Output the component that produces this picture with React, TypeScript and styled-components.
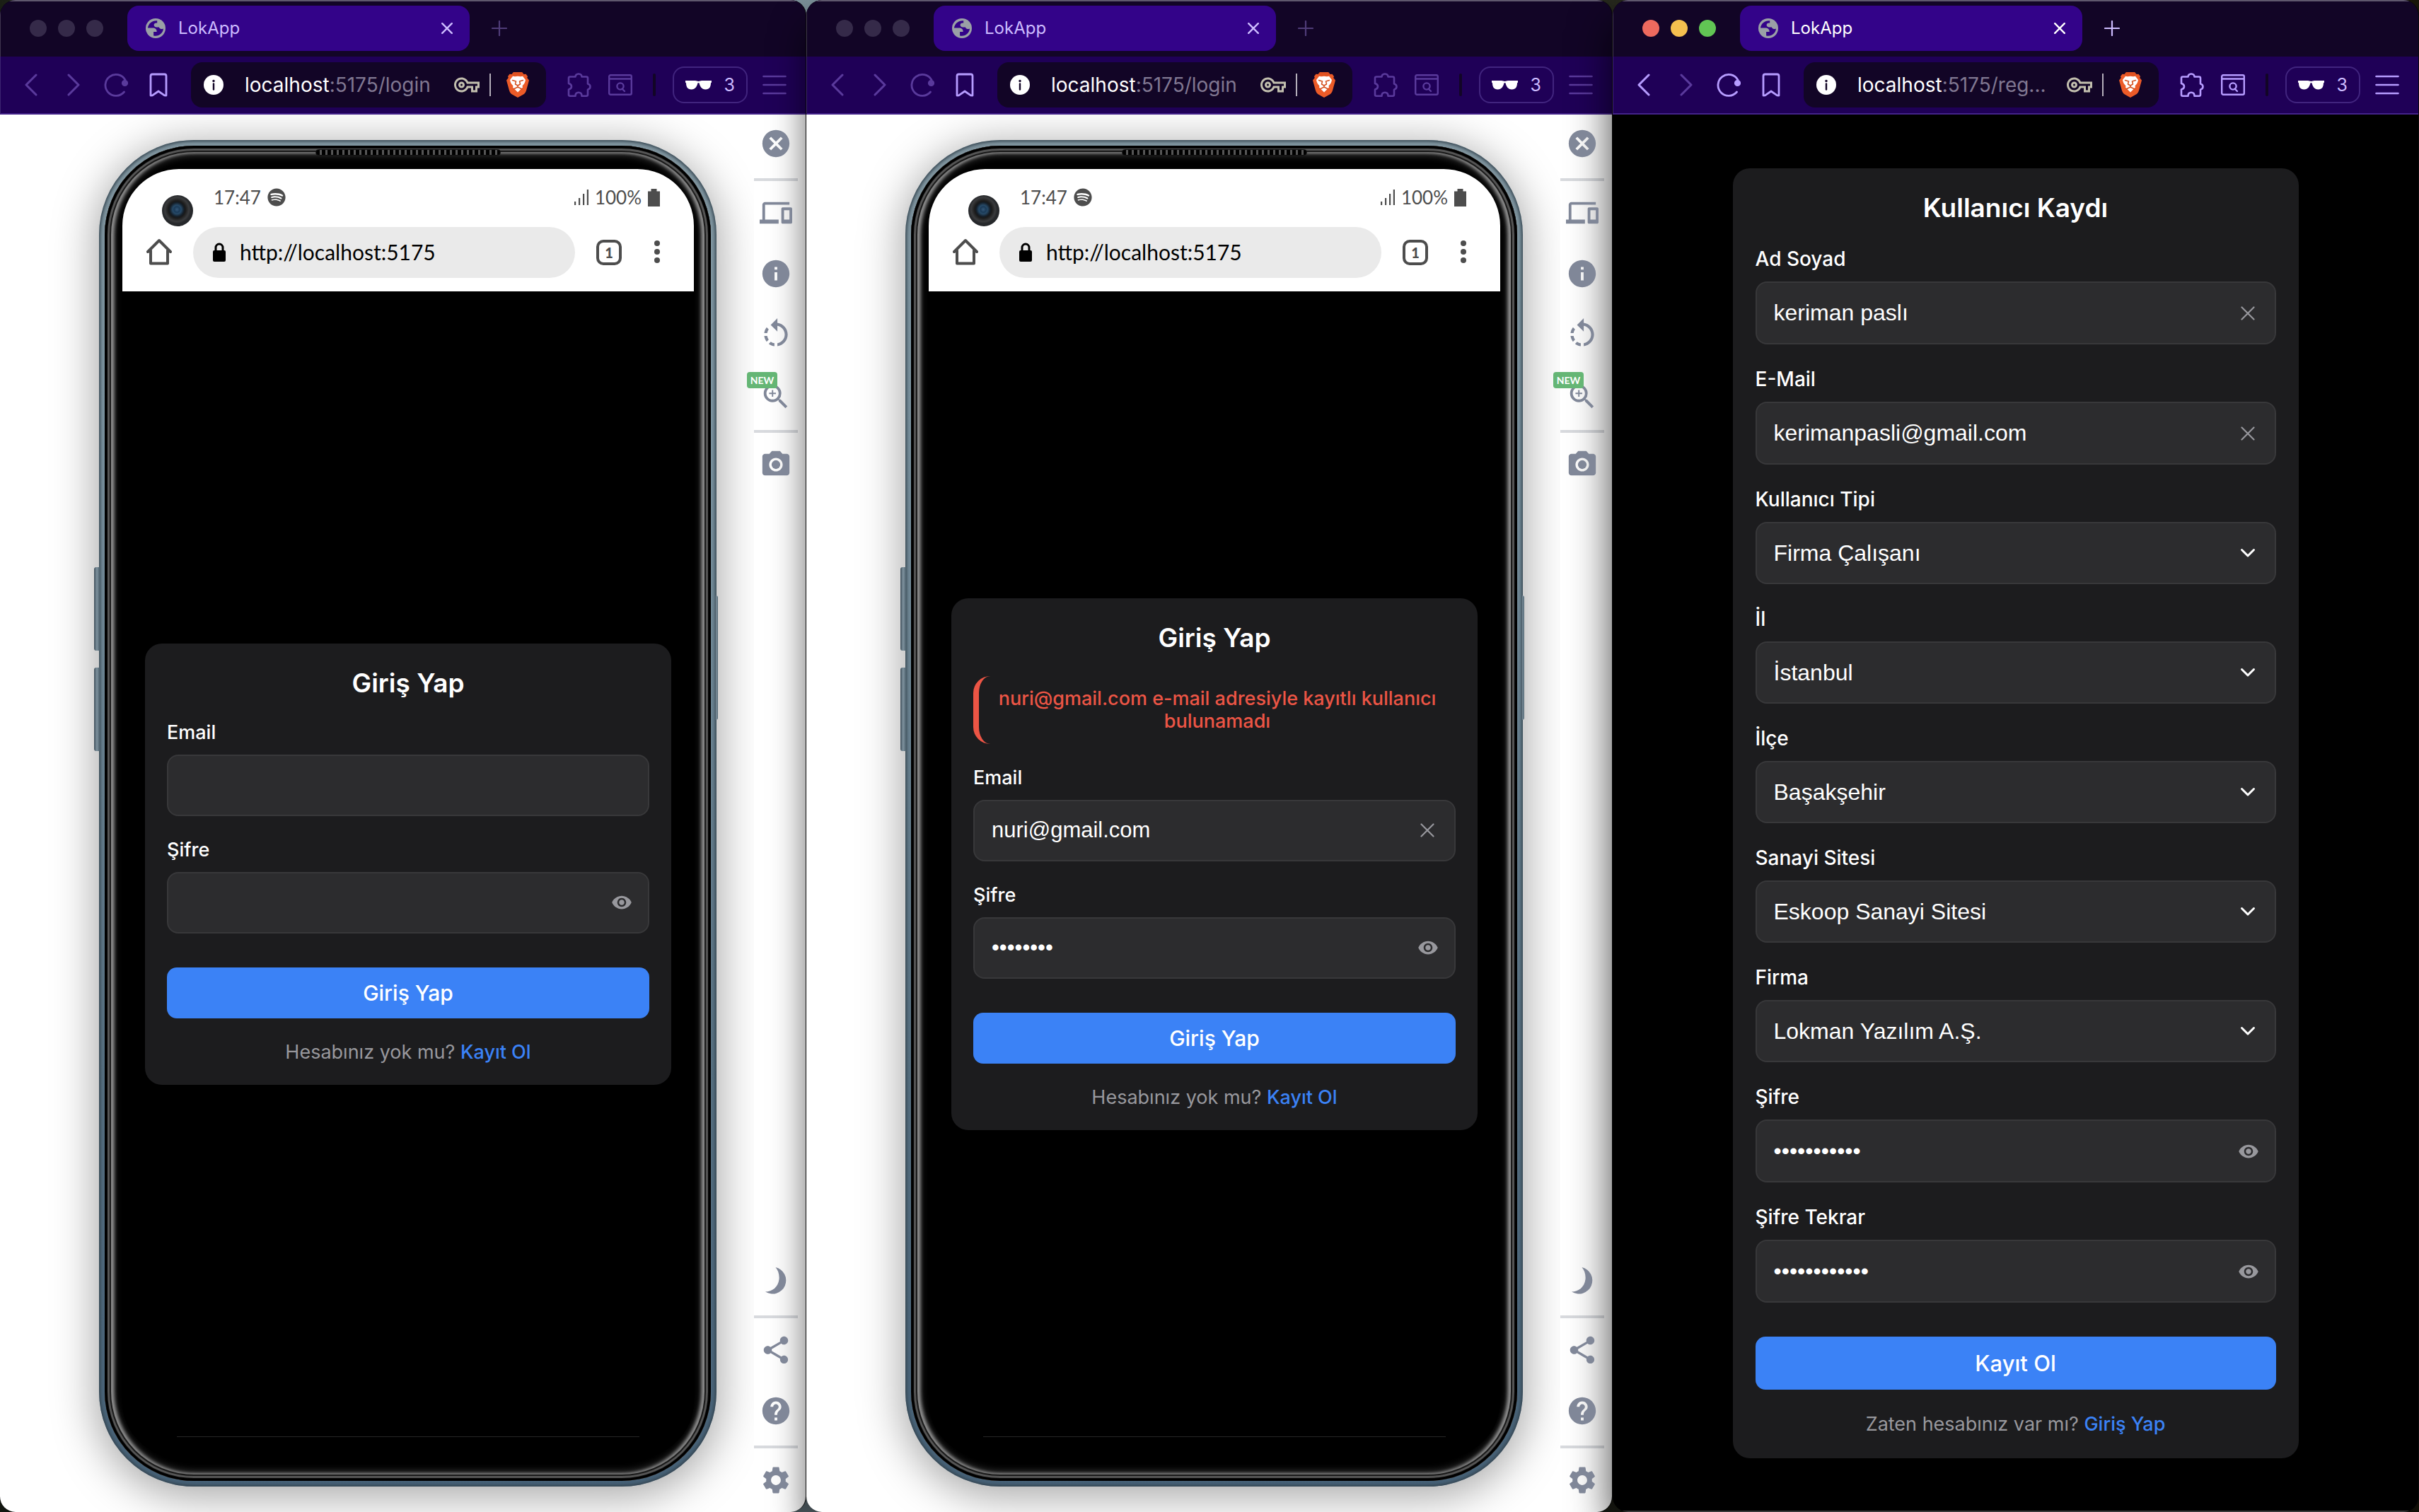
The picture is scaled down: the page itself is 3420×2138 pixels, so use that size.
import React, { useId, useState } from "react";
import styled, { createGlobalStyle, css } from "styled-components";
import {
  MdCancel,
  MdDevices,
  MdHelp,
  MdInfo,
  MdOutlineVpnKey,
  MdPhotoCamera,
  MdRotateLeft,
  MdSettings,
  MdShare,
  MdVisibility,
  MdZoomIn,
} from "react-icons/md";
import { FaSpotify } from "react-icons/fa";

const ui = `Inter, "Noto Sans", "Liberation Sans", sans-serif`;
const field = `"Liberation Sans", Arial, sans-serif`;
const phoneFont = `Lato, "Open Sans", sans-serif`;

const color = {
  strip: "#120526",
  tab: "#330389",
  toolbar: "#1f0057",
  line: "#43228a",
  lilac: "#b69cff",
  lilacDim: "#5a3a9c",
  card: "#1c1c1e",
  input: "#2c2c2e",
  inputLine: "#38383a",
  blue: "#3b82f6",
  muted: "#98989d",
  red: "#ec5545",
  tool: "#808798",
};

const GlobalStyle = createGlobalStyle`
  *, *::before, *::after { box-sizing: border-box; }
  body { margin: 0; background: #14160f; font-family: ${ui}; }
  button, input, select { font: inherit; color: inherit; margin: 0; }
  button { border: 0; padding: 0; background: none; cursor: pointer; }
`;

/* ---------- desktop and browser windows ---------- */

const Desktop = styled.div`
  display: grid;
  grid-template-columns: repeat(3, minmax(0, 1fr));
  min-height: 100vh;
  overflow: hidden;
  background: linear-gradient(to right, #1b2016, #7d929c 33%, #2a2d22 60%, #1a170a);
`;

const WindowFrame = styled.section<{ $active: boolean }>`
  display: flex;
  flex-direction: column;
  border-radius: 22px;
  overflow: hidden;
  border-right: 1px solid #0b0b0b;
  background: #000;
  box-shadow: ${(p) => (p.$active ? "0 30px 60px rgba(0,0,0,.75)" : "0 36px 50px rgba(0,0,0,.6)")};
`;

const TabStrip = styled.div`
  display: flex;
  align-items: center;
  height: 80px;
  padding: 6px 0 8px 41px;
  border-top: 2px solid #5f586d;
  border-left: 1px solid #40364f;
  background: ${color.strip};
`;

const Lights = styled.div`
  display: flex;
  gap: 16px;
  width: 138px;
`;

const Light = styled.span<{ $fill: string }>`
  width: 24px;
  height: 24px;
  border-radius: 50%;
  background: ${(p) => p.$fill};
`;

const Tab = styled.div<{ $active: boolean }>`
  display: flex;
  align-items: center;
  gap: 18px;
  width: 484px;
  height: 64px;
  padding: 0 20px 0 26px;
  border-radius: 16px;
  background: ${color.tab};
  color: ${(p) => (p.$active ? "#ffffff" : "#cdbcff")};
  font-size: 24px;
  line-height: 32px;
`;

const TabTitle = styled.span`
  flex: 1;
`;

const SmallButton = styled.button<{ $tint: string }>`
  display: grid;
  place-items: center;
  width: 24px;
  height: 24px;
  color: ${(p) => p.$tint};
`;

const NewTab = styled(SmallButton)`
  margin-left: 30px;
`;

const Toolbar = styled.div`
  display: flex;
  align-items: center;
  height: 82px;
  padding: 0 14px 0 13px;
  border-bottom: 2px solid ${color.line};
  border-left: 1px solid #3c2470;
  background: ${color.toolbar};
`;

const ToolButton = styled.button<{ $on?: boolean; $w?: number }>`
  display: grid;
  place-items: center;
  width: ${(p) => p.$w ?? 60}px;
  height: 60px;
  color: ${(p) => (p.$on ? color.lilac : color.lilacDim)};
`;

const Address = styled.div`
  display: flex;
  align-items: center;
  flex: 1;
  height: 64px;
  margin: 0 18px 0 16px;
  padding: 0 24px 0 18px;
  border-radius: 16px;
  background: ${color.strip};
`;

const AddressText = styled.span`
  flex: 1;
  margin-left: 30px;
  color: #807791;
  font-size: 28px;
  line-height: 36px;
  white-space: nowrap;
  b {
    color: #fff;
    font-weight: 400;
  }
`;

const AddressRule = styled.span`
  width: 2px;
  height: 32px;
  margin: 0 22px 0 14px;
  background: #b4afba;
`;

const BarRule = styled.span`
  width: 4px;
  height: 32px;
  margin: 0 24px 0 17px;
  border-radius: 2px;
  background: #120526;
`;

const PrivatePill = styled.button`
  display: flex;
  align-items: center;
  justify-content: space-between;
  width: 106px;
  height: 52px;
  margin-right: 8px;
  padding: 0 16px 0 16px;
  border: 2px solid #41247e;
  border-radius: 16px;
  color: #cdbcff;
  font-size: 25px;
  line-height: 32px;
`;

/* ---------- emulator page ---------- */

const EmulatorPage = styled.div`
  display: flex;
  flex: 1;
  background: #fff;
`;

const Stage = styled.main`
  display: flex;
  flex: 1;
  padding: 36px 53px 36px 140px;
  overflow: hidden;
`;

const PhoneBody = styled.div`
  position: relative;
  display: flex;
  flex: 1;
  padding: 8px;
  border-radius: 134px;
  background: linear-gradient(#80959f, #7b929e 20%, #566f80 70%, #466177);
  box-shadow:
    inset 0 0 4px 2px #34444f,
    0 10px 60px 6px rgba(0, 0, 0, 0.34);
`;

const SideKey = styled.i<{ $top: number; $height: number; $right?: boolean }>`
  position: absolute;
  top: ${(p) => p.$top}px;
  ${(p) => (p.$right ? "right: -2px;" : "left: -7px;")}
  width: ${(p) => (p.$right ? 4 : 8)}px;
  height: ${(p) => p.$height}px;
  border-radius: ${(p) => (p.$right ? "0 3px 3px 0" : "3px 0 0 3px")};
  background: linear-gradient(to right, #3f4f5b, #7f939f 50%, #4c5f6b);
`;

const Speaker = styled.i`
  position: absolute;
  top: 13px;
  left: 50%;
  width: 262px;
  height: 9px;
  margin-left: -131px;
  border-radius: 5px;
  border: 1px solid #111;
  background: repeating-linear-gradient(to right, #000 0 5px, #555 5px 8px);
`;

const Bezel = styled.div`
  display: flex;
  flex: 1;
  padding: 33px 24px 33px 25px;
  border-radius: 126px;
  background: #000;
  box-shadow:
    inset 0 0 1px 4px #000,
    inset 0 0 1px 7px #595959,
    inset 0 0 1px 9px #111,
    inset 4px 0 5px 9px #999,
    inset -4px 0 5px 9px #999,
    inset 0 0 12px 12px #4a4a4a;
`;

const Screen = styled.div`
  display: flex;
  flex-direction: column;
  flex: 1;
  overflow: hidden;
  border-radius: 80px;
  background: #000;
  font-family: ${phoneFont};
`;

const PhoneHeader = styled.header`
  display: flex;
  flex-direction: column;
  height: 173px;
  padding: 26px 48px 18px 34px;
  background: #fff;
  color: #4d4d4d;
`;

const StatusRow = styled.div`
  display: flex;
  align-items: center;
  gap: 9px;
  height: 28px;
  font-size: 26px;
  line-height: 28px;
`;

const CameraHole = styled.i`
  width: 44px;
  height: 44px;
  margin: 38px 20px 0 22px;
  border-radius: 50%;
  background: radial-gradient(circle at 48% 46%, #35597a 0, #1b3a57 4px, #274a68 6px, #141d26 10px, #1a1a1a 12px, #3a3b3d 17px, #26282b 20px);
`;

const StatusTime = styled.span`
  display: flex;
  flex: 1;
  align-items: center;
  gap: 9px;
`;

const PhoneNav = styled.div`
  display: flex;
  align-items: center;
  height: 72px;
  margin-top: 28px;
`;

const PhoneUrl = styled.label`
  display: flex;
  align-items: center;
  flex: 1;
  gap: 20px;
  height: 72px;
  margin: 0 30px;
  padding: 0 28px 2px;
  border-radius: 36px;
  background: #eaeaea;
  color: #000;
  input {
    flex: 1;
    min-width: 0;
    border: 0;
    padding: 0;
    background: none;
    font-size: 30px;
    line-height: 40px;
    outline: 0;
  }
`;

const TabsCount = styled.button`
  width: 36px;
  height: 36px;
  margin-right: 46px;
  border: 4px solid #4d4d4d;
  border-radius: 10px;
  font-size: 20px;
  font-weight: 900;
  line-height: 26px;
`;

const PhonePage = styled.div`
  display: flex;
  flex: 1;
  flex-direction: column;
  justify-content: center;
  padding: 0 32px;
  background: #000;
`;

const GestureLine = styled.div`
  height: 30px;
  margin: 0 77px;
  border-top: 1px solid #262626;
`;

const SideTools = styled.nav`
  display: flex;
  flex-direction: column;
  align-items: center;
  width: 62px;
  margin-right: 11px;
  padding: 18px 0 22px;
  color: ${color.tool};
`;

const SideTool = styled.button<{ $gap?: number; $h?: number }>`
  position: relative;
  display: grid;
  place-items: center;
  flex: none;
  width: 62px;
  height: ${(p) => p.$h ?? 46}px;
  margin-top: ${(p) => p.$gap ?? 0}px;
`;

const SideRule = styled.hr`
  flex: none;
  width: 62px;
  height: 4px;
  margin: 26px 0 22px;
  border: 0;
  background: #d8dade;
`;

const Spring = styled.span`
  flex: 1;
`;

const NewBadge = styled.span`
  position: absolute;
  top: -12px;
  left: -10px;
  width: 43px;
  height: 23px;
  border-radius: 4px;
  background: #65b675;
  color: #fff;
  font: 700 14px/23px ${phoneFont};
  text-align: center;
`;

/* ---------- forms ---------- */

const RegisterPage = styled.main`
  display: flex;
  flex: 1;
  align-items: center;
  justify-content: center;
  background: #000;
  box-shadow: inset 0 -2px #3a3a3a;
`;

const Card = styled.form<{ $large?: boolean }>`
  display: flex;
  flex-direction: column;
  width: 100%;
  max-width: ${(p) => (p.$large ? "800px" : "none")};
  padding: ${(p) => (p.$large ? "32px" : "32px 31px 30px")};
  border-radius: 24px;
  background: ${color.card};
  color: #fff;
  font-family: ${ui};
`;

const Title = styled.h1<{ $large?: boolean }>`
  margin: 0 0 ${(p) => (p.$large ? 32 : 30)}px;
  font-size: 37px;
  font-weight: 600;
  line-height: 48px;
  text-align: center;
`;

const ErrorBox = styled.p`
  margin: 0 0 32px;
  padding: 16px;
  border-left: 8px solid ${color.red};
  border-radius: 24px;
  color: ${color.red};
  font-size: 27px;
  font-weight: 500;
  line-height: 32px;
  text-align: center;
`;

const FieldGroup = styled.div<{ $large?: boolean }>`
  display: flex;
  flex-direction: column;
  gap: ${(p) => (p.$large ? 16 : 15)}px;
  margin-bottom: ${(p) => (p.$large ? 33 : 32)}px;
`;

const Label = styled.label<{ $large?: boolean }>`
  font-size: ${(p) => (p.$large ? 28 : 27)}px;
  font-weight: 500;
  line-height: 32px;
`;

const control = css`
  flex: 1;
  min-width: 0;
  height: 100%;
  padding: 0;
  border: 0;
  outline: 0;
  background: transparent;
  color: #fff;
  font-family: ${field};
`;

const Control = styled.div<{ $height: number }>`
  display: flex;
  align-items: center;
  height: ${(p) => p.$height}px;
  padding: 0 24px;
  border: 2px solid ${color.inputLine};
  border-radius: 16px;
  background: ${color.input};
  color: ${color.muted};
  font-size: ${(p) => (p.$height > 87 ? 32 : 31)}px;
`;

const Input = styled.input`
  ${control}
`;

const SelectWrap = styled.div`
  display: grid;
  grid-template-columns: minmax(0, 1fr) 28px;
  align-items: center;
  height: 88px;
  padding: 0 24px;
  border: 2px solid ${color.inputLine};
  border-radius: 16px;
  background: ${color.input};
  color: #fff;
  font-size: 32px;
  svg {
    grid-area: 1 / 2;
    pointer-events: none;
  }
`;

const Select = styled.select`
  ${control}
  grid-area: 1 / 1 / 2 / 3;
  appearance: none;
`;

const InnerButton = styled.button`
  display: grid;
  place-items: center;
  width: 28px;
  height: 40px;
`;

const Submit = styled.button<{ $large?: boolean }>`
  height: ${(p) => (p.$large ? 75 : 72)}px;
  margin: ${(p) => (p.$large ? 15 : 16)}px 0 ${(p) => (p.$large ? 33 : 32)}px;
  border-radius: 14px;
  background: ${color.blue};
  font-size: ${(p) => (p.$large ? 31 : 30)}px;
  font-weight: 500;
`;

const Footnote = styled.p`
  margin: 0;
  color: ${color.muted};
  font-size: 27px;
  line-height: 32px;
  text-align: center;
  a {
    color: ${color.blue};
    font-weight: 500;
    text-decoration: none;
  }
`;

/* ---------- drawings ---------- */

const stroke = { fill: "none", stroke: "currentColor", strokeLinecap: "round", strokeLinejoin: "round" } as const;

const CrossIcon = ({ size = 16, width = 3 }) => (
  <svg width={size} height={size} viewBox="0 0 20 20" {...stroke} strokeWidth={width}>
    <path d="M1.5 1.5l17 17M18.5 1.5l-17 17" />
  </svg>
);
const PlusIcon = () => (
  <svg width="22" height="22" viewBox="0 0 22 22" {...stroke} strokeWidth="2.2">
    <path d="M11 1v20M1 11h20" />
  </svg>
);
const GlobeIcon = () => (
  <svg width="28" height="28" viewBox="0 0 28 28">
    <circle cx="14" cy="14" r="14" fill="#9aa0a6" />
    <path
      fill={color.tab}
      d="M16.2 3.2C9.300 2.600 3.400 7.500 3 13.600h7.200c3 0 5.400 2 5.400 4.600v.9h-4.500v5.300c7 1.700 13.500-3.500 13.900-9.900-1 .5-2.200.7-3.400.4-1.600-.4-2.400-1.400-2.700-2.400h-3.700c-2 0-3.600-1.400-3.600-3.200 0-1.700 1.500-2.900 3.400-2.900h1.200z"
    />
  </svg>
);
const BackIcon = () => (
  <svg width="18" height="32" viewBox="0 0 18 32" {...stroke} strokeWidth="3">
    <path d="M16 2L2 16l14 14" />
  </svg>
);
const ForwardIcon = () => (
  <svg width="18" height="32" viewBox="0 0 18 32" {...stroke} strokeWidth="3">
    <path d="M2 2l14 14L2 30" />
  </svg>
);
const ReloadIcon = () => (
  <svg width="34" height="34" viewBox="0 0 34 34" {...stroke} strokeWidth="2.800">
    <path d="M28.500 27A15 15 0 1 1 30 10" />
    <circle cx="29.500" cy="14.500" r="3.200" fill="currentColor" />
  </svg>
);
const BookmarkIcon = () => (
  <svg width="26" height="34" viewBox="0 0 26 34" {...stroke} strokeWidth="2.800">
    <path d="M2 4.500A2.500 2.500 0 0 1 4.500 2h17A2.500 2.500 0 0 1 24 4.500V32l-2.500-.2L13 26l-8.500 5.800L2 32z" />
  </svg>
);
const SiteInfoIcon = () => (
  <svg width="28" height="28" viewBox="0 0 28 28">
    <circle cx="14" cy="14" r="14" fill="#fff" />
    <circle cx="14" cy="8.500" r="1.700" fill={color.strip} />
    <path d="M14 12.500v8" stroke={color.strip} strokeWidth="2.400" strokeLinecap="round" />
  </svg>
);
const LionIcon = () => (
  <svg width="32" height="36" viewBox="0 0 32 36">
    <path fill="#ec5b28" d="M10 0h12l2.500 3 3-.3L30 6l-.8 2L32 11.500 28 26c-.8 2.800-2 4-4 5.600L16 36l-8-4.400C6 30 4.800 28.800 4 26L0 11.500 2.800 8 2 6l2.500-3.300 3 .3z" />
    <path fill="#d94c1c" d="M10 0h12l2.500 3-2 2h-13l-2-2z" opacity=".6" />
    <path fill="#fff" d="M9 5.800l3 .5c2.700-.8 5.300-.8 8 0l3-.5 4 5.200c-.6 3.500-2 6-4.500 8.500l.5 2-7 7-7-7 .5-2C7 17 5.600 14.500 5 11z" />
    <path {...stroke} stroke="#d4501f" strokeWidth="1.500" d="M8.500 11.500l5 1.500-1 4 3.500 2 3.500-2-1-4 5-1.500M16 19v2.500M10 24l6-3 6 3" />
  </svg>
);
const PuzzleIcon = () => (
  <svg width="34" height="34" viewBox="0 0 34 34" {...stroke} strokeWidth="2.600">
    <path d="M2 7.500C2 6 3 5.500 4 5.500h7.500C11.500 3.500 13 1.500 16 1.500s4.500 2 4.500 4H27c1.200 0 2 .8 2 2v8c2 .6 3.500 2 3.500 4s-1.500 3.600-3.500 4.200V31c0 1-.8 1.700-2 1.700h-6.500c0-3-1.800-5-4.500-5s-4.500 2-4.500 5H4c-1.200 0-2-.7-2-1.700v-7.500c2.500-.7 4-2 4-4.300 0-2.200-1.500-3.500-4-4.200z" />
  </svg>
);
const FindIcon = () => (
  <svg width="34" height="30" viewBox="0 0 34 30" {...stroke} strokeWidth="2.400">
    <rect x="1.200" y="1.200" width="31.600" height="27.600" rx="2" />
    <path d="M1.500 6.500h31M19.500 20.500l3.500 3.500" />
    <circle cx="17" cy="17" r="4.600" />
  </svg>
);
const GlassesIcon = () => (
  <svg width="37" height="13" viewBox="0 0 37 13">
    <path fill="#fff" d="M0 0h14l4.500 1L23 0h14v2.500l-1 1c0 5-2 9-7.500 9S20.500 8 19.500 3.200h-2C16.500 8 14 12.500 8.500 12.500S1 8.500 1 3.500l-1-1z" />
  </svg>
);
const MenuIcon = () => (
  <svg width="34" height="28" viewBox="0 0 34 28" {...stroke} strokeWidth="2.600">
    <path d="M1.500 2h31M1.500 14h31M1.500 26h31" />
  </svg>
);
const HomeIcon = () => (
  <svg width="36" height="38" viewBox="0 0 36 38" {...stroke} strokeWidth="4">
    <path d="M2 19L18 3l16 16M6 17v18.500h24V17" />
  </svg>
);
const LockIcon = () => (
  <svg width="18" height="27" viewBox="0 0 18 27">
    <rect y="11" width="18" height="16" rx="2" />
    <path d="M4 13V7a5 5 0 0 1 10 0v6" fill="none" stroke="#000" strokeWidth="3" />
  </svg>
);
const SignalIcon = () => (
  <svg width="20" height="22" viewBox="0 0 20 22" fill="#4d4d4d">
    <path d="M0 17h2.200v5H0zM6 12h2.200v10H6zM12 6h2.200v16H12zM17.800 0H20v22h-2.200z" />
  </svg>
);
const BatteryIcon = () => (
  <svg width="17" height="25" viewBox="0 0 17 25" fill="#4d4d4d">
    <path d="M4.500 0h8v3.500H17V25H0V3.500h4.500z" />
  </svg>
);
const DotsIcon = () => (
  <svg width="8" height="32" viewBox="0 0 8 32" fill="#4d4d4d">
    <circle cx="4" cy="4" r="4" />
    <circle cx="4" cy="16" r="4" />
    <circle cx="4" cy="28" r="4" />
  </svg>
);
const MoonIcon = () => (
  <svg width="32" height="38" viewBox="0 0 32 38" fill="currentColor">
    <path d="M15.500 0A19 19 0 1 1 1 34.500C11 34.500 19 28 20.500 17 21.200 10 19 4 15.500 0z" />
  </svg>
);
const ChevronIcon = () => (
  <svg width="28" height="14" viewBox="0 0 28 14" {...stroke} strokeWidth="3">
    <path d="M5.500 2.500L14 11l8.500-8.500" />
  </svg>
);

/* ---------- composed parts ---------- */

type BrowserProps = { active?: boolean; path: string; children: React.ReactNode };

function BrowserWindow({ active = false, path, children }: BrowserProps) {
  const lights = active ? ["#ed6a5e", "#f5bf4f", "#61c554"] : ["#352a49", "#352a49", "#352a49"];
  return (
    <WindowFrame $active={active}>
      <TabStrip>
        <Lights>
          {lights.map((fill, i) => (
            <Light key={i} $fill={fill} />
          ))}
        </Lights>
        <Tab $active={active}>
          <GlobeIcon />
          <TabTitle>LokApp</TabTitle>
          <SmallButton $tint={active ? "#fff" : "#cdbcff"} aria-label="Sekmeyi kapat">
            <CrossIcon />
          </SmallButton>
        </Tab>
        <NewTab $tint={active ? "#cdbcff" : "#4f3c78"} aria-label="Yeni sekme">
          <PlusIcon />
        </NewTab>
      </TabStrip>
      <Toolbar>
        <ToolButton $on={active} aria-label="Geri"><BackIcon /></ToolButton>
        <ToolButton aria-label="İleri"><ForwardIcon /></ToolButton>
        <ToolButton $on={active} aria-label="Yenile"><ReloadIcon /></ToolButton>
        <ToolButton $on aria-label="Yer imi"><BookmarkIcon /></ToolButton>
        <Address>
          <SiteInfoIcon />
          <AddressText><b>localhost</b>{path}</AddressText>
          <MdOutlineVpnKey size={36} color="#c2bfae" />
          <AddressRule />
          <LionIcon />
        </Address>
        <ToolButton $on={active} $w={58} aria-label="Uzantılar"><PuzzleIcon /></ToolButton>
        <ToolButton $on={active} $w={58} aria-label="Sayfada ara"><FindIcon /></ToolButton>
        <BarRule />
        <PrivatePill><GlassesIcon />3</PrivatePill>
        <ToolButton $on={active} aria-label="Menü"><MenuIcon /></ToolButton>
      </Toolbar>
      {children}
    </WindowFrame>
  );
}

type TextFieldProps = { label: string; value?: string; secret?: boolean; large?: boolean };

function TextField({ label, value = "", secret, large }: TextFieldProps) {
  const id = useId();
  const [text, setText] = useState(value);
  const [shown, setShown] = useState(false);
  return (
    <FieldGroup $large={large}>
      <Label htmlFor={id} $large={large}>{label}</Label>
      <Control $height={large ? 89 : 87}>
        <Input
          id={id}
          type={secret && !shown ? "password" : "text"}
          value={text}
          onChange={(e) => setText(e.target.value)}
        />
        {secret ? (
          <InnerButton type="button" aria-label="Şifreyi göster" onClick={() => setShown(!shown)}>
            <MdVisibility size={30} />
          </InnerButton>
        ) : (
          text && (
            <InnerButton type="button" aria-label="Temizle" onClick={() => setText("")}>
              <CrossIcon size={20} width={2.2} />
            </InnerButton>
          )
        )}
      </Control>
    </FieldGroup>
  );
}

function SelectField({ label, value }: { label: string; value: string }) {
  const id = useId();
  return (
    <FieldGroup $large>
      <Label htmlFor={id} $large>{label}</Label>
      <SelectWrap>
        <Select id={id} defaultValue={value}>
          <option>{value}</option>
        </Select>
        <ChevronIcon />
      </SelectWrap>
    </FieldGroup>
  );
}

type LoginProps = { error?: string; email?: string; password?: string };

function LoginCard({ error, email, password }: LoginProps) {
  return (
    <Card onSubmit={(e) => e.preventDefault()}>
      <Title>Giriş Yap</Title>
      {error && <ErrorBox>{error}</ErrorBox>}
      <TextField label="Email" value={email} />
      <TextField label="Şifre" value={password} secret />
      <Submit>Giriş Yap</Submit>
      <Footnote>Hesabınız yok mu? <a href="#register">Kayıt Ol</a></Footnote>
    </Card>
  );
}

function RegisterCard() {
  return (
    <Card $large onSubmit={(e) => e.preventDefault()}>
      <Title $large>Kullanıcı Kaydı</Title>
      <TextField large label="Ad Soyad" value="keriman paslı" />
      <TextField large label="E-Mail" value="kerimanpasli@gmail.com" />
      <SelectField label="Kullanıcı Tipi" value="Firma Çalışanı" />
      <SelectField label="İl" value="İstanbul" />
      <SelectField label="İlçe" value="Başakşehir" />
      <SelectField label="Sanayi Sitesi" value="Eskoop Sanayi Sitesi" />
      <SelectField label="Firma" value="Lokman Yazılım A.Ş." />
      <TextField large secret label="Şifre" value="keriman1234" />
      <TextField large secret label="Şifre Tekrar" value="keriman12345" />
      <Submit $large>Kayıt Ol</Submit>
      <Footnote>Zaten hesabınız var mı? <a href="#login">Giriş Yap</a></Footnote>
    </Card>
  );
}

function Phone({ children }: { children: React.ReactNode }) {
  return (
    <PhoneBody>
      <SideKey $top={604} $height={118} />
      <SideKey $top={746} $height={118} />
      <SideKey $top={644} $height={176} $right />
      <Bezel>
        <Screen>
          <PhoneHeader>
            <StatusRow>
              <CameraHole />
              <StatusTime>17:47 <FaSpotify size={26} /></StatusTime>
              <SignalIcon />
              100%
              <BatteryIcon />
            </StatusRow>
            <PhoneNav>
              <button aria-label="Ana sayfa"><HomeIcon /></button>
              <PhoneUrl>
                <LockIcon />
                <input aria-label="Adres" readOnly value="http://localhost:5175" />
              </PhoneUrl>
              <TabsCount aria-label="Sekmeler">1</TabsCount>
              <button aria-label="Diğer"><DotsIcon /></button>
            </PhoneNav>
          </PhoneHeader>
          <PhonePage>{children}</PhonePage>
          <GestureLine />
        </Screen>
      </Bezel>
      <Speaker />
    </PhoneBody>
  );
}

function Emulator({ children }: { children: React.ReactNode }) {
  return (
    <EmulatorPage>
      <Stage>
        <Phone>{children}</Phone>
      </Stage>
      <SideTools>
        <SideTool aria-label="Kapat"><MdCancel size={46} /></SideTool>
        <SideRule />
        <SideTool aria-label="Cihazlar"><MdDevices size={46} /></SideTool>
        <SideTool $gap={40} aria-label="Bilgi"><MdInfo size={46} /></SideTool>
        <SideTool $gap={38} aria-label="Döndür"><MdRotateLeft size={50} /></SideTool>
        <SideTool $gap={44} $h={44} aria-label="Yakınlaştır">
          <MdZoomIn size={46} />
          <NewBadge>NEW</NewBadge>
        </SideTool>
        <SideRule />
        <SideTool aria-label="Ekran görüntüsü"><MdPhotoCamera size={46} /></SideTool>
        <Spring />
        <SideTool aria-label="Karanlık mod"><MoonIcon /></SideTool>
        <SideRule />
        <SideTool aria-label="Paylaş"><MdShare size={46} /></SideTool>
        <SideTool $gap={40} aria-label="Yardım"><MdHelp size={46} /></SideTool>
        <SideRule />
        <SideTool aria-label="Ayarlar"><MdSettings size={46} /></SideTool>
      </SideTools>
    </EmulatorPage>
  );
}

export default function App() {
  return (
    <>
      <GlobalStyle />
      <Desktop>
        <BrowserWindow path=":5175/login">
          <Emulator>
            <LoginCard />
          </Emulator>
        </BrowserWindow>
        <BrowserWindow path=":5175/login">
          <Emulator>
            <LoginCard
              error="nuri@gmail.com e-mail adresiyle kayıtlı kullanıcı bulunamadı"
              email="nuri@gmail.com"
              password="nuri1234"
            />
          </Emulator>
        </BrowserWindow>
        <BrowserWindow active path=":5175/reg...">
          <RegisterPage>
            <RegisterCard />
          </RegisterPage>
        </BrowserWindow>
      </Desktop>
    </>
  );
}
